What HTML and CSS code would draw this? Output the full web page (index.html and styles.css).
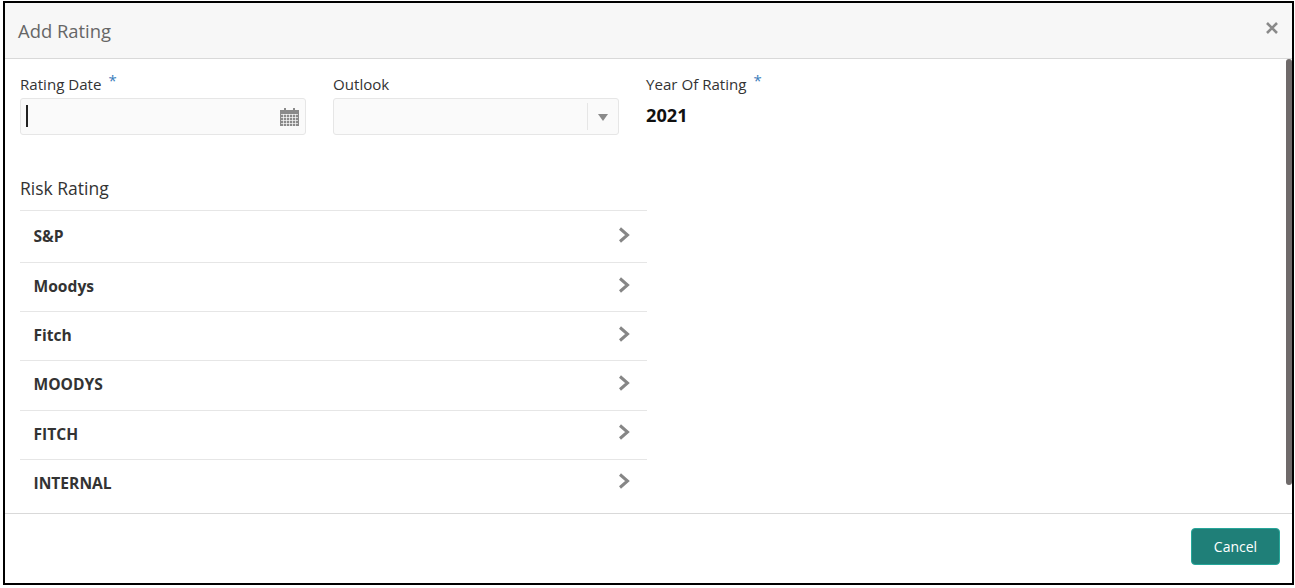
FILE: index.html
```html
<!DOCTYPE html>
<html lang="en">
<head>
<meta charset="utf-8">
<title>Add Rating</title>
<link rel="stylesheet" href="styles.css">
</head>
<body>
<div class="modal">
  <header class="modal-header">
    <h1 class="modal-title">Add Rating</h1>
    <svg class="close" viewBox="0 0 12 12" width="12" height="12"><path d="M1 1l10 10M11 1L1 11" stroke="#8a8a8a" stroke-width="2.6" fill="none"/></svg>
  </header>
  <main class="modal-body">
    <div class="form-row">
      <div class="field">
        <label class="label">Rating Date <span class="req">*</span></label>
        <div class="input">
          <span class="caret"></span>
          <svg class="cal" viewBox="0 0 19 19" width="19" height="19">
            <path fill="#8a8a8a" d="M0 3h4V1h2v2h7V1h2v2h4v16H0z"/>
            <path stroke="#fafafa" stroke-width="0.7" fill="none" d="M1 7.5h17M1 10.5h17M1 13.5h17M1 16.5h17M3.5 7v12M6.5 7v12M9.5 7v12M12.5 7v12M15.5 7v12"/>
          </svg>
        </div>
      </div>
      <div class="field">
        <label class="label">Outlook</label>
        <div class="input select">
          <span class="divider"></span>
          <span class="arrow"></span>
        </div>
      </div>
      <div class="field">
        <label class="label">Year Of Rating <span class="req">*</span></label>
        <div class="value">2021</div>
      </div>
    </div>
    <h2 class="section">Risk Rating</h2>
    <ul class="accordion">
      <li class="item"><span>S&amp;P</span><svg class="chev" viewBox="0 0 12 16" width="12" height="16"><path d="M2 1.5L9.5 8L2 14.5" stroke="#868686" stroke-width="3" fill="none"/></svg></li>
      <li class="item"><span>Moodys</span><svg class="chev" viewBox="0 0 12 16" width="12" height="16"><path d="M2 1.5L9.5 8L2 14.5" stroke="#868686" stroke-width="3" fill="none"/></svg></li>
      <li class="item"><span>Fitch</span><svg class="chev" viewBox="0 0 12 16" width="12" height="16"><path d="M2 1.5L9.5 8L2 14.5" stroke="#868686" stroke-width="3" fill="none"/></svg></li>
      <li class="item"><span>MOODYS</span><svg class="chev" viewBox="0 0 12 16" width="12" height="16"><path d="M2 1.5L9.5 8L2 14.5" stroke="#868686" stroke-width="3" fill="none"/></svg></li>
      <li class="item"><span>FITCH</span><svg class="chev" viewBox="0 0 12 16" width="12" height="16"><path d="M2 1.5L9.5 8L2 14.5" stroke="#868686" stroke-width="3" fill="none"/></svg></li>
      <li class="item"><span>INTERNAL</span><svg class="chev" viewBox="0 0 12 16" width="12" height="16"><path d="M2 1.5L9.5 8L2 14.5" stroke="#868686" stroke-width="3" fill="none"/></svg></li>
    </ul>
    <div class="scrollbar"></div>
  </main>
  <footer class="modal-footer">
    <button class="btn" type="button">Cancel</button>
  </footer>
</div>
</body>
</html>
```
FILE: styles.css
```css
* { box-sizing: border-box; }
html, body { margin: 0; padding: 0; background: #fff; }
body { font-family: "Open Sans", "Liberation Sans", sans-serif; color: #2c2c2c; height: 588px; overflow: hidden; padding: 1px 1px 3px 3px; }
.modal { height: 584px; border: 2px solid #000; display: flex; flex-direction: column; background: #fff; }
.modal-header { height: 56px; flex: none; background: #f7f7f7; border-bottom: 1px solid #d9d9d9; display: flex; justify-content: space-between; align-items: flex-start; padding: 0 14px 0 13px; }
.modal-title { margin: 15px 0 0; font-size: 18.4px; line-height: 26px; font-weight: 400; color: #666; }
.close { margin-top: 19px; }
.modal-body { position: relative; flex: 1; padding: 12px 0 0 15px; }
.form-row { display: flex; gap: 27px; }
.field { width: 286px; }
.label { display: block; font-size: 15.1px; line-height: 26px; height: 27px; color: #333; }
.req { color: #3b7dbb; font-size: 15px; position: relative; top: -4px; margin-left: 3px; }
.input { height: 37px; background: #fafafa; border: 1px solid #e6e6e6; border-radius: 3px; display: flex; align-items: center; justify-content: space-between; padding: 0 6px 0 5px; }
.caret { width: 2px; height: 22px; margin-top: -1px; background: #222; }
.select { justify-content: flex-end; padding-right: 10px; gap: 10px; }
.divider { width: 1px; height: 27px; background: #e6e6e6; }
.arrow { width: 0; height: 0; border-left: 5.5px solid transparent; border-right: 5.5px solid transparent; border-top: 7px solid #8a8a8a; margin-top: 2px; }
.value { font-size: 18.2px; font-weight: 700; color: #111; line-height: 35px; }
.section { margin: 40px 0 9px; font-size: 17.5px; line-height: 26px; font-weight: 400; color: #333; }
.accordion { list-style: none; margin: 0; padding: 0; width: 627px; }
.item { height: 49.2px; border-top: 1px solid #e6e6e6; display: flex; justify-content: space-between; align-items: center; padding: 0 17px 2px 13.5px; font-size: 15.6px; font-weight: 700; color: #333; }
.item:first-child { height: 52px; padding-top: 1px; }
.chev { margin-top: -3px; }
.scrollbar { position: absolute; top: 0; right: 0; width: 6px; height: 426px; background: #6f6a6a; border-radius: 3px; }
.modal-footer { height: 70px; flex: none; border-top: 1px solid #d9d9d9; display: flex; justify-content: flex-end; padding: 14px 12px 0 0; }
.btn { width: 89px; height: 37px; background: #1f7f78; border: 1px solid #26a69a; border-radius: 4px; color: #fff; font: 400 14px "Open Sans", sans-serif; }
```
